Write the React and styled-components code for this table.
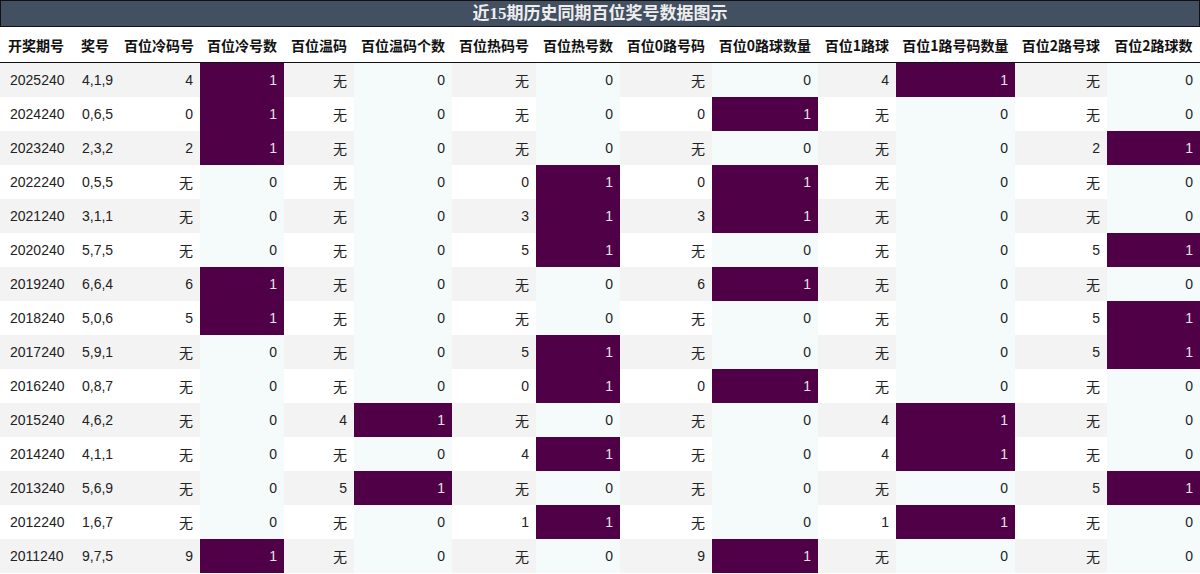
import React from 'react';
import styled, { createGlobalStyle } from 'styled-components';

const GlobalStyle = createGlobalStyle`
  html, body { margin: 0; padding: 0; background: #fff; }
  body { font-family: "Liberation Sans", "Noto Sans CJK SC", sans-serif; }
`;

const Wrap = styled.div`
  width: 1200px;
`;

const TitleBar = styled.div`
  height: 25px;
  background: #425062;
  border: 1px solid #111;
  display: flex;
  align-items: center;
  justify-content: center;
  color: #eeeeee;
  font-family: "Liberation Serif", "Noto Sans CJK SC", serif;
  font-weight: bold;
  font-size: 17px;
  line-height: 25px;
`;

const Table = styled.table`
  width: 1200px;
  border-collapse: collapse;
  table-layout: fixed;
`;

const Th = styled.th`
  height: 35px;
  padding: 0;
  font-family: "Noto Sans CJK SC", sans-serif;
  font-weight: bold;
  font-size: 14px;
  color: #111;
  text-align: center;
  border-bottom: 1px solid #111;
  white-space: nowrap;
`;

const Tr = styled.tr`
  height: 34px;
`;

const Td = styled.td`
  padding: 0 ${p => (p.$left ? '0' : '7px')} 0 ${p => (p.$left ? '10px' : '0')};
  text-align: ${p => (p.$left ? 'left' : 'right')};
  font-size: 14px;
  color: ${p => (p.$hot ? '#e8e0ea' : '#222')};
  background: ${p =>
    p.$hot ? '#4f0047' : p.$count ? '#f5fbfb' : p.$odd ? '#f3f3f3' : '#ffffff'};
  white-space: nowrap;
`;

const cols = [
  { t: '开奖期号', w: 72, left: true },
  { t: '奖号', w: 46, left: true },
  { t: '百位冷码号', w: 82 },
  { t: '百位冷号数', w: 84, count: true },
  { t: '百位温码', w: 70 },
  { t: '百位温码个数', w: 98, count: true },
  { t: '百位热码号', w: 84 },
  { t: '百位热号数', w: 84, count: true },
  { t: '百位0路号码', w: 92 },
  { t: '百位0路球数量', w: 106, count: true },
  { t: '百位1路球', w: 78 },
  { t: '百位1路号码数量', w: 119 },
  { t: '百位2路号球', w: 92 },
  { t: '百位2路球数', w: 93, count: true },
];
cols[11].count = true;

const rows = [
  ['2025240', '4,1,9', '4', '1', '无', '0', '无', '0', '无', '0', '4', '1', '无', '0'],
  ['2024240', '0,6,5', '0', '1', '无', '0', '无', '0', '0', '1', '无', '0', '无', '0'],
  ['2023240', '2,3,2', '2', '1', '无', '0', '无', '0', '无', '0', '无', '0', '2', '1'],
  ['2022240', '0,5,5', '无', '0', '无', '0', '0', '1', '0', '1', '无', '0', '无', '0'],
  ['2021240', '3,1,1', '无', '0', '无', '0', '3', '1', '3', '1', '无', '0', '无', '0'],
  ['2020240', '5,7,5', '无', '0', '无', '0', '5', '1', '无', '0', '无', '0', '5', '1'],
  ['2019240', '6,6,4', '6', '1', '无', '0', '无', '0', '6', '1', '无', '0', '无', '0'],
  ['2018240', '5,0,6', '5', '1', '无', '0', '无', '0', '无', '0', '无', '0', '5', '1'],
  ['2017240', '5,9,1', '无', '0', '无', '0', '5', '1', '无', '0', '无', '0', '5', '1'],
  ['2016240', '0,8,7', '无', '0', '无', '0', '0', '1', '0', '1', '无', '0', '无', '0'],
  ['2015240', '4,6,2', '无', '0', '4', '1', '无', '0', '无', '0', '4', '1', '无', '0'],
  ['2014240', '4,1,1', '无', '0', '无', '0', '4', '1', '无', '0', '4', '1', '无', '0'],
  ['2013240', '5,6,9', '无', '0', '5', '1', '无', '0', '无', '0', '无', '0', '5', '1'],
  ['2012240', '1,6,7', '无', '0', '无', '0', '1', '1', '无', '0', '1', '1', '无', '0'],
  ['2011240', '9,7,5', '9', '1', '无', '0', '无', '0', '9', '1', '无', '0', '无', '0'],
];

export default function App() {
  return (
    <Wrap>
      <GlobalStyle />
      <TitleBar>近15期历史同期百位奖号数据图示</TitleBar>
      <Table>
        <colgroup>
          {cols.map((c, i) => (
            <col key={i} style={{ width: c.w }} />
          ))}
        </colgroup>
        <thead>
          <tr>
            {cols.map((c, i) => (
              <Th key={i}>{c.t}</Th>
            ))}
          </tr>
        </thead>
        <tbody>
          {rows.map((r, ri) => (
            <Tr key={ri}>
              {r.map((v, ci) => {
                const c = cols[ci];
                return (
                  <Td
                    key={ci}
                    $left={c.left}
                    $count={c.count}
                    $odd={ri % 2 === 0}
                    $hot={c.count && v === '1'}
                  >
                    {v}
                  </Td>
                );
              })}
            </Tr>
          ))}
        </tbody>
      </Table>
    </Wrap>
  );
}
